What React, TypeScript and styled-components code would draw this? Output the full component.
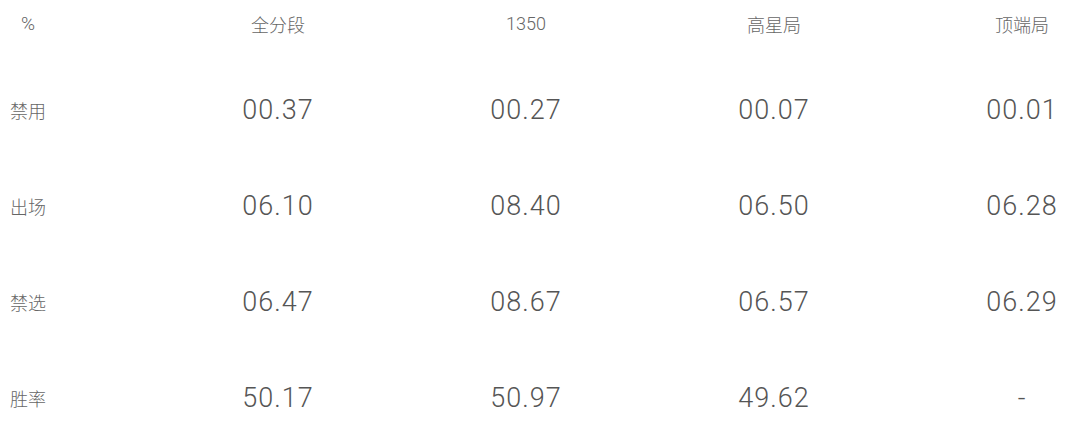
import React from "react";
import styled, { createGlobalStyle } from "styled-components";

const Global = createGlobalStyle`
  html, body { margin: 0; padding: 0; background: #ffffff; }
  body { font-family: Roboto, "Noto Sans CJK SC", sans-serif; }
`;

const Table = styled.div`
  display: grid;
  grid-template-columns: 88px repeat(4, 116px);
  column-gap: 132px;
  width: 1080px;
`;

const Row = styled.div<{ $height: number; $bottom?: number }>`
  display: contents;
  & > * {
    height: ${(p) => p.$height}px;
    padding-bottom: ${(p) => p.$bottom ?? 0}px;
  }
`;

const Cell = styled.div`
  box-sizing: border-box;
  display: flex;
  align-items: center;
  justify-content: center;
  white-space: nowrap;
`;

const HeadCell = styled(Cell)`
  font-size: 18px;
  font-weight: 300;
  color: #666666;
`;

const CornerCell = styled(HeadCell)`
  justify-content: flex-start;
  padding-left: 21px;
  font-size: 19px;
`;

const LabelCell = styled(Cell)`
  justify-content: flex-start;
  padding-left: 10px;
  font-size: 18px;
  font-weight: 300;
  color: #666666;
`;

const ValueCell = styled(Cell)`
  font-size: 27px;
  font-weight: 300;
  letter-spacing: 1px;
  color: #555555;
`;

const headers = ["全分段", "1350", "高星局", "顶端局"];
const rows: [string, string[]][] = [
  ["禁用", ["00.37", "00.27", "00.07", "00.01"]],
  ["出场", ["06.10", "08.40", "06.50", "06.28"]],
  ["禁选", ["06.47", "08.67", "06.57", "06.29"]],
  ["胜率", ["50.17", "50.97", "49.62", "-"]],
];

export default function App() {
  return (
    <>
      <Global />
      <Table>
        <Row $height={62} $bottom={15}>
          <CornerCell>%</CornerCell>
          {headers.map((h) => (
            <HeadCell key={h}>{h}</HeadCell>
          ))}
        </Row>
        {rows.map(([label, vals]) => (
          <Row key={label} $height={96}>
            <LabelCell>{label}</LabelCell>
            {vals.map((v, j) => (
              <ValueCell key={j}>{v}</ValueCell>
            ))}
          </Row>
        ))}
      </Table>
    </>
  );
}
